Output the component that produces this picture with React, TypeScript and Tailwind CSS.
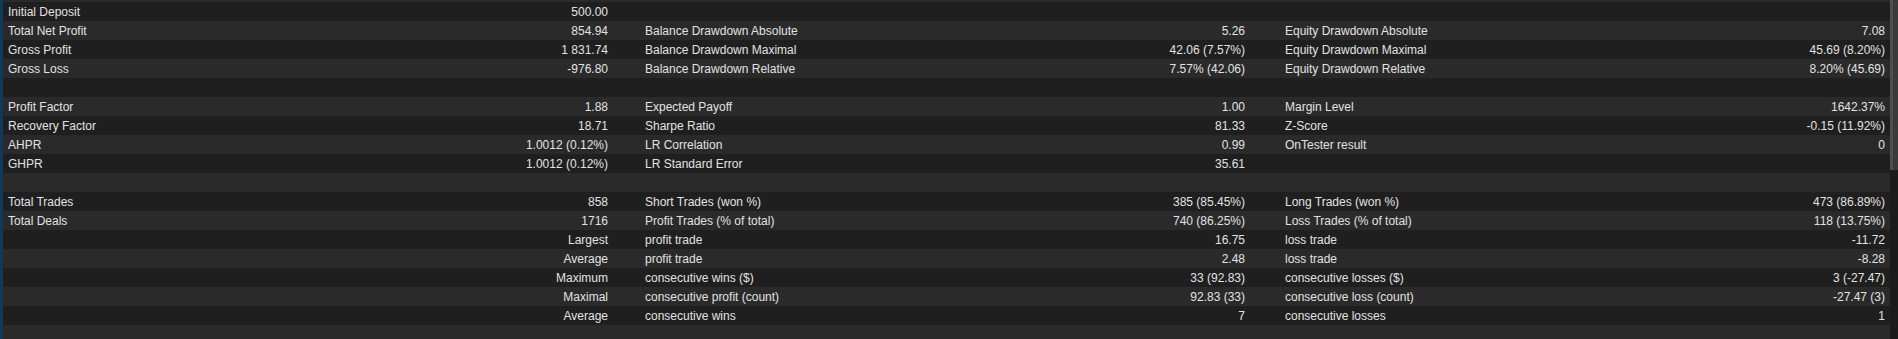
import React from "react";

type Row = [string, string, string, string, string, string] | null;

const rows: Row[] = [
  ["Initial Deposit", "500.00", "", "", "", ""],
  ["Total Net Profit", "854.94", "Balance Drawdown Absolute", "5.26", "Equity Drawdown Absolute", "7.08"],
  ["Gross Profit", "1 831.74", "Balance Drawdown Maximal", "42.06 (7.57%)", "Equity Drawdown Maximal", "45.69 (8.20%)"],
  ["Gross Loss", "-976.80", "Balance Drawdown Relative", "7.57% (42.06)", "Equity Drawdown Relative", "8.20% (45.69)"],
  null,
  ["Profit Factor", "1.88", "Expected Payoff", "1.00", "Margin Level", "1642.37%"],
  ["Recovery Factor", "18.71", "Sharpe Ratio", "81.33", "Z-Score", "-0.15 (11.92%)"],
  ["AHPR", "1.0012 (0.12%)", "LR Correlation", "0.99", "OnTester result", "0"],
  ["GHPR", "1.0012 (0.12%)", "LR Standard Error", "35.61", "", ""],
  null,
  ["Total Trades", "858", "Short Trades (won %)", "385 (85.45%)", "Long Trades (won %)", "473 (86.89%)"],
  ["Total Deals", "1716", "Profit Trades (% of total)", "740 (86.25%)", "Loss Trades (% of total)", "118 (13.75%)"],
  ["", "Largest", "profit trade", "16.75", "loss trade", "-11.72"],
  ["", "Average", "profit trade", "2.48", "loss trade", "-8.28"],
  ["", "Maximum", "consecutive wins ($)", "33 (92.83)", "consecutive losses ($)", "3 (-27.47)"],
  ["", "Maximal", "consecutive profit (count)", "92.83 (33)", "consecutive loss (count)", "-27.47 (3)"],
  ["", "Average", "consecutive wins", "7", "consecutive losses", "1"],
  null,
];

function Group({ label, value, extra }: { label: string; value: string; extra?: boolean }) {
  return (
    <div className={`flex w-[600px] shrink-0 justify-between ${extra ? "ml-[3px]" : ""}`}>
      <span>{label}</span>
      <span>{value}</span>
    </div>
  );
}

export default function App() {
  return (
    <div
      className="flex h-[339px] w-full overflow-hidden bg-[#202020] text-[12px] text-[#e2e2e2]"
      style={{ fontFamily: '"Liberation Sans", Arial, sans-serif' }}
    >
      <div className="w-[3px] shrink-0 bg-[#0e3a5c]" />
      <div className="flex min-w-0 flex-1 flex-col">
        <div className="h-[2px] shrink-0 bg-[#2a2a2a]" />
        {rows.map((r, i) => (
          <div
            key={i}
            className={`flex h-[19px] shrink-0 items-center gap-[37px] pl-[5px] pt-[2px] leading-[17px] ${
              i % 2 === 0 ? "bg-[#1f1f1f]" : "bg-[#2a2a2a]"
            }`}
          >
            {r && (
              <>
                <Group label={r[0]} value={r[1]} />
                <Group label={r[2]} value={r[3]} />
                <Group label={r[4]} value={r[5]} extra />
              </>
            )}
          </div>
        ))}
      </div>
      <div className="flex w-[8px] shrink-0 flex-col bg-[#1b1b1b]">
        <div className="h-[170px] border-l-[3px] border-[#4e4e4e] bg-[#3a3a3a]" />
      </div>
    </div>
  );
}
